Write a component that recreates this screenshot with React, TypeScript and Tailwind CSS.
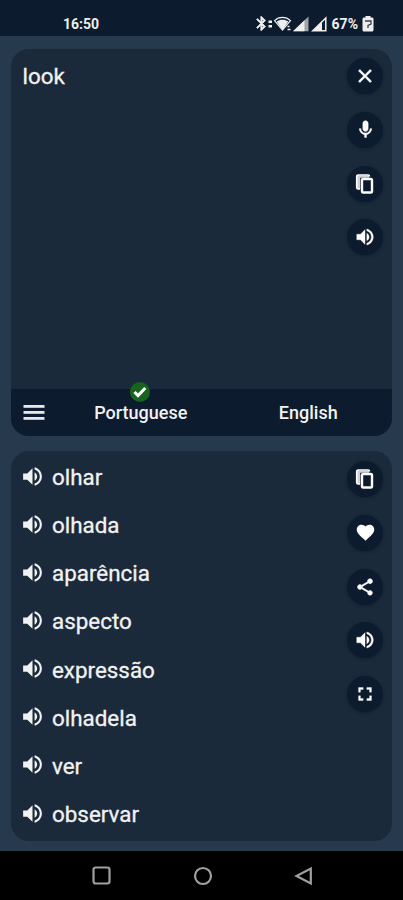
import { useState } from 'react';
import type { ComponentType } from 'react';
import { MdBluetooth, MdClose, MdFavorite, MdFullscreen, MdMic, MdShare, MdVolumeUp } from 'react-icons/md';

const translations = ['olhar', 'olhada', 'aparência', 'aspecto', 'expressão', 'olhadela', 'ver', 'observar'];

interface Action {
  label: string;
  icon: ComponentType<{ size?: number | string; className?: string }>;
  size?: number;
  className?: string;
}

function CopyIcon({ size = 22 }: { size?: number | string }) {
  return (
    <svg width={size} height={size} viewBox="0 0 22 22" fill="none" stroke="currentColor">
      <path d="M15.5 3.500V3.300c0-.8-.5-1.300-1.300-1.300H4.300C3.300 2 2.700 2.600 2.700 3.600v11c0 .8.5 1.400 1.500 1.400H6" strokeWidth="1.6" />
      <path d="M3 2.500h12v2.300H6.200V16H3Z" fill="currentColor" fillOpacity="0.8" stroke="none" />
      <rect x="8" y="6" width="10" height="13.500" rx="1.3" strokeWidth="2.4" />
    </svg>
  );
}

// The icons carry an invisible bounding path, which must stay unstroked
const inputActions: Action[] = [
  { label: 'Clear', icon: MdClose, className: 'stroke-current stroke-[0.8] [&>path[fill=none]]:stroke-none' },
  { label: 'Dictate', icon: MdMic, size: 21, className: 'stroke-current stroke-[0.6] [&>path[fill=none]]:stroke-none' },
  { label: 'Copy', icon: CopyIcon },
  { label: 'Listen', icon: MdVolumeUp, className: 'stroke-current stroke-[0.4] [&>path[fill=none]]:stroke-none' },
];

const resultActions: Action[] = [
  { label: 'Copy', icon: CopyIcon },
  { label: 'Favorite', icon: MdFavorite, size: 21 },
  { label: 'Share', icon: MdShare, size: 20, className: 'stroke-current stroke-[0.6] [&>path[fill=none]]:stroke-none' },
  { label: 'Listen', icon: MdVolumeUp, className: 'stroke-current stroke-[0.4] [&>path[fill=none]]:stroke-none' },
  { label: 'Fullscreen', icon: MdFullscreen, className: 'stroke-current stroke-[0.4] [&>path[fill=none]]:stroke-none' },
];

function ActionColumn({ actions }: { actions: Action[] }) {
  return (
    <div className="flex flex-col gap-[17.8px]">
      {actions.map(({ label, icon: Icon, size = 22, className }) => (
        <button
          key={label}
          type="button"
          aria-label={label}
          className="flex h-9 w-9 items-center justify-center rounded-full bg-[#0c1b2d] text-white shadow-[0_1px_3px_rgba(8,22,38,0.5)]"
        >
          <Icon size={size} className={className} />
        </button>
      ))}
    </div>
  );
}

function StatusBar() {
  return (
    <header className="flex h-9 shrink-0 items-end justify-between bg-[#0c1b2d] pb-[4px] pl-[63px] pr-[29px] text-[14px] font-bold leading-4 text-[#eeeeee]">
      <span>16:50</span>
      <div className="flex items-center">
        <MdBluetooth size={17} className="-mr-[2px] stroke-current stroke-1 [&>path[fill=none]]:stroke-none" />
        <svg width="5" height="16" viewBox="0 0 5 16" fill="currentColor">
          <rect x="0.5" y="4.5" width="3.5" height="2.5" />
          <rect x="0.5" y="9" width="3.5" height="2.5" />
        </svg>
        {/* wifi */}
        <svg width="19" height="16" viewBox="0 0 18 16" fill="none" stroke="currentColor">
          <path d="M1 4.6C5.5.2 12.5.2 17 4.6L9 14Z" strokeWidth="1.2" />
          <path d="M3.2 5.6c3.4-2.6 8.2-2.6 11.6 0L9 14Z" fill="currentColor" stroke="none" />
          <path d="M14 10.5h2M14 13.5h3" strokeWidth="1.5" />
        </svg>
        {/* signal, first sim */}
        <svg width="18" height="16" viewBox="0 0 18 16" fill="currentColor">
          <path d="M1 15.3 16.5.5v14.8Z" opacity="0.65" />
          <path d="M1 15.3 12.5 4.3v11Z" />
        </svg>
        {/* signal, second sim */}
        <svg width="18" height="16" viewBox="0 0 18 16" fill="currentColor">
          <path d="M2.8 14.8 15.8 2v12.8Z" fill="none" stroke="currentColor" strokeWidth="1.5" />
          <path d="M2.5 15 12 5.5V15Z" />
        </svg>
        <span className="mx-1">67%</span>
        <svg width="12" height="16" viewBox="0 0 12 16" fill="currentColor">
          <path d="M3.5 0h5v1.5H10c.8 0 1.5.7 1.5 1.5v11c0 .8-.7 1.5-1.5 1.5H2c-.8 0-1.5-.7-1.5-1.5V3c0-.8.7-1.5 1.5-1.5h1.5Z" />
          <path d="M3 5h6v3L6 9.500V12" fill="none" stroke="#35404c" strokeWidth="1.3" />
        </svg>
      </div>
    </header>
  );
}

function NavigationBar() {
  return (
    <footer className="flex h-[49px] shrink-0 items-center justify-between bg-black pl-[92px] pr-[90px] text-[#a0a0a0]">
      <svg width="19" height="19" viewBox="0 0 19 19" fill="none" stroke="currentColor" strokeWidth="2.2">
        <rect x="1.5" y="1.5" width="16" height="16" rx="2.2" />
      </svg>
      <svg width="20" height="20" viewBox="0 0 20 20" fill="none" stroke="currentColor" strokeWidth="2.2">
        <circle cx="10" cy="10" r="8" />
      </svg>
      <svg width="19" height="20" viewBox="0 0 19 20" fill="none" stroke="currentColor" strokeWidth="2.2">
        <path d="M16.8 2.5v15L2.5 10Z" />
      </svg>
    </footer>
  );
}

export default function App() {
  const [target, setTarget] = useState('Portuguese');

  return (
    <div className="flex h-[900px] w-[403px] flex-col overflow-hidden bg-[#27394c] font-[Roboto,sans-serif] text-[#f2f2f2]">
      <StatusBar />

      <main className="flex flex-1 flex-col gap-[15px] px-[11px] pb-[10px] pt-[13px]">
        {/* Source text */}
        <section className="flex h-[387px] flex-col overflow-hidden rounded-[18px] bg-[#1b2a3b]">
          <div className="flex flex-1 items-start justify-between pl-[11.5px] pr-[9px] pt-[9px]">
            <p className="pt-[3px] text-[22.4px] leading-[30px] [-webkit-text-stroke:0.3px]">look</p>
            <ActionColumn actions={inputActions} />
          </div>
          <div className="flex h-[47px] items-center bg-[#0c1b2d] pl-3">
            <button type="button" aria-label="Menu" className="w-[34px]">
              <svg width="22" height="16" viewBox="0 0 22 16" fill="#e8e8e8">
                <rect x="0.5" y="0" width="21" height="2.8" />
                <rect x="0.5" y="6" width="21" height="2.8" />
                <rect x="0.5" y="12" width="21" height="2.8" />
              </svg>
            </button>
            <div className="grid flex-1 grid-cols-2 text-[18px] font-medium leading-6">
              {['Portuguese', 'English'].map((language) => (
                <button key={language} type="button" onClick={() => setTarget(language)} className="relative">
                  {language}
                  {target === language && (
                    <span className="absolute -top-[19px] left-1/2 -ml-px flex h-5 w-5 -translate-x-1/2 items-center justify-center rounded-full bg-[#17641f]">
                      <svg width="14" height="12" viewBox="0 0 14 12" fill="none" stroke="white" strokeWidth="3">
                        <path d="m1.500 6 3.500 3.500L12.300 2" />
                      </svg>
                    </span>
                  )}
                </button>
              ))}
            </div>
          </div>
        </section>

        {/* Translations */}
        <section className="flex flex-1 items-start justify-between rounded-[18px] bg-[#1b2a3b] px-[9px] pt-[10px]">
          <ul className="-mt-2">
            {translations.map((word) => (
              <li key={word} className="flex h-[48.15px] items-center gap-[7px] text-[22.4px] leading-[30px] [-webkit-text-stroke:0.3px]">
                <MdVolumeUp size={25} className="-mt-[2px]" />
                <span>{word}</span>
              </li>
            ))}
          </ul>
          <ActionColumn actions={resultActions} />
        </section>
      </main>

      <NavigationBar />
    </div>
  );
}
